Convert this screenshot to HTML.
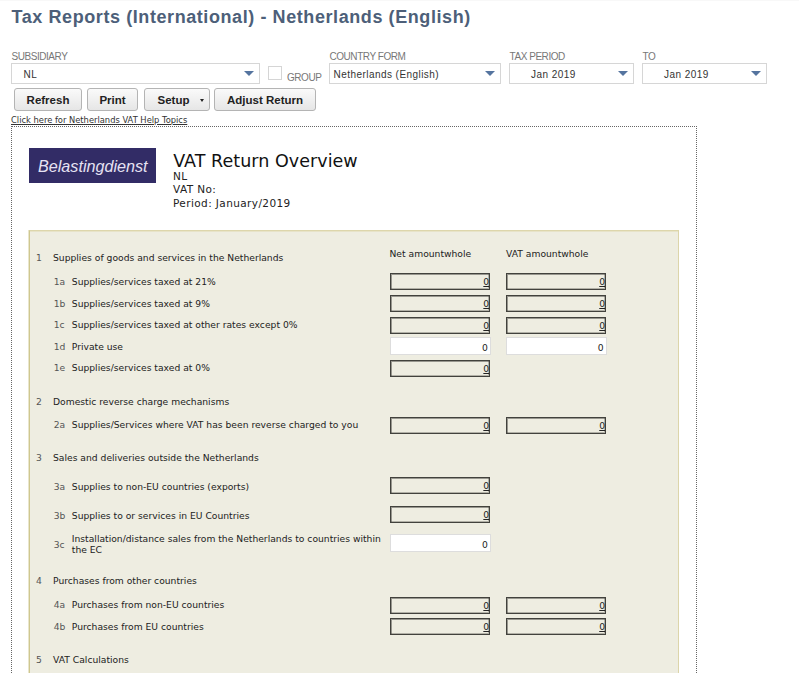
<!DOCTYPE html>
<html lang="en">
<head>
<meta charset="utf-8">
<title>Tax Reports (International) - Netherlands (English)</title>
<style>
html,body{margin:0;padding:0;background:#fff;}
body{width:799px;height:689px;position:relative;overflow:hidden;font-family:"Liberation Sans",sans-serif;}
.topline{position:absolute;left:0;top:0;width:799px;height:1px;background:#f8f8f8;}
h1.title{position:absolute;left:11.5px;top:3px;margin:0;font-family:"Liberation Sans",sans-serif;font-weight:bold;font-size:18px;line-height:28px;color:#4d5f79;white-space:nowrap;letter-spacing:0.58px;}
.lbl{position:absolute;top:50px;font-size:10px;line-height:14px;color:#777;white-space:nowrap;letter-spacing:-0.45px;}
.sel{position:absolute;top:63px;height:19px;border:1px solid #d6d6d6;background:#fff;box-sizing:content-box;}
.sel span{position:absolute;top:1px;line-height:20px;font-size:10px;color:#333;white-space:nowrap;letter-spacing:0.45px;}
.sel i{position:absolute;right:5px;top:7px;width:0;height:0;border-left:5px solid transparent;border-right:5px solid transparent;border-top:5.5px solid #55749f;}
.car{position:absolute;left:55px;top:10px;width:0;height:0;border-left:2.5px solid transparent;border-right:2.5px solid transparent;border-top:3px solid #222;}
.chk{position:absolute;left:268px;top:66px;width:12px;height:12px;border:1px solid #d5d5d5;background:#fff;}
.btn{position:absolute;top:88px;height:21px;border:1px solid #b4b4b4;border-radius:3px;background:linear-gradient(#fafafa,#e6e6e6);font-weight:bold;font-size:11.5px;line-height:22px;color:#222;text-align:center;white-space:nowrap;box-sizing:content-box;}
a.help{position:absolute;left:11px;top:114.7px;font-size:8.33px;line-height:11px;color:#333;text-decoration:underline;text-underline-offset:1px;white-space:nowrap;}
.dot{position:absolute;left:11px;top:126px;width:684px;height:560px;border:1px dotted #666;border-bottom:none;}
.logo{position:absolute;left:29px;top:148px;width:127px;height:34.5px;background:#322c66;}
.logo span{position:absolute;left:9px;top:8px;font-style:italic;font-size:17px;line-height:22px;transform:scaleX(0.95);color:#e6e2f3;white-space:nowrap;transform-origin:0 50%;}
.v{font-family:"DejaVu Sans","Liberation Sans",sans-serif;}
.h2{position:absolute;left:173.2px;letter-spacing:0.04px;top:149.5px;font-size:17.5px;line-height:22px;color:#111;white-space:nowrap;}
.sm{position:absolute;left:173px;font-size:10.5px;line-height:13px;color:#222;white-space:nowrap;letter-spacing:0.4px;}
.box{position:absolute;left:29px;top:230px;width:648px;height:460px;background:#eeede1;border:1px solid #dcd5aa;border-left-color:#cfc78f;border-top-color:#ddd6ab;box-shadow:-1px 0 0 rgba(207,199,143,0.45), inset 0 1px 0 rgba(221,214,171,0.45);}
.t{position:absolute;font-size:9.2px;line-height:12px;color:#222;white-space:nowrap;}
.n{position:absolute;font-size:9.2px;line-height:12px;color:#555;white-space:nowrap;}
.ro{position:absolute;width:98px;height:15px;border:1px solid #42423d;box-shadow:inset 1px 1px 0 0 rgba(66,66,61,0.5), inset -1px -1px 0 0 rgba(66,66,61,0.35);background:#eeede1;box-sizing:content-box;}
.ro a{position:absolute;right:-0.5px;top:2px;font-size:9.2px;line-height:12px;color:#222;text-decoration:underline;}
.ed{position:absolute;width:99px;height:16px;border:1px solid #ddd;background:#fff;box-sizing:content-box;}
.ed span{position:absolute;right:1.9px;top:4px;font-size:9.2px;line-height:12px;color:#222;}
.cut{position:absolute;left:0;top:672.5px;width:799px;height:20px;background:#fff;}
</style>
</head>
<body>
<div class="topline"></div>
<h1 class="title">Tax Reports (International) - Netherlands (English)</h1>

<div class="lbl" style="left:11.5px">SUBSIDIARY</div>
<div class="lbl" style="left:329.5px">COUNTRY FORM</div>
<div class="lbl" style="left:509.5px">TAX PERIOD</div>
<div class="lbl" style="left:642.5px">TO</div>

<div class="sel" style="left:11px;width:247px"><span style="left:11.5px">NL</span><i></i></div>
<div class="chk"></div>
<div class="lbl" style="left:287px;top:70.5px">GROUP</div>
<div class="sel" style="left:329px;width:170px"><span style="left:3.5px">Netherlands (English)</span><i></i></div>
<div class="sel" style="left:509px;width:123px"><span style="left:21px">Jan 2019</span><i></i></div>
<div class="sel" style="left:642px;width:123px"><span style="left:21px">Jan 2019</span><i></i></div>

<div class="btn" style="left:14px;width:66px">Refresh</div>
<div class="btn" style="left:87px;width:49px">Print</div>
<div class="btn" style="left:144px;width:64px;text-align:left"><span style="position:absolute;left:12.5px;top:0">Setup</span><b class="car"></b></div>
<div class="btn" style="left:214px;width:100px">Adjust Return</div>

<a class="help v">Click here for Netherlands VAT Help Topics</a>

<div class="dot"></div>
<div class="logo"><span>Belastingdienst</span></div>
<div class="h2 v">VAT Return Overview</div>
<div class="sm v" style="top:170px">NL</div>
<div class="sm v" style="top:183.25px">VAT No:</div>
<div class="sm v" style="top:196.5px">Period: January/2019</div>

<div class="box"></div>
<!--ROWS-->
<div class="t v" style="left:389.5px;top:247.8px">Net amountwhole</div>
<div class="t v" style="left:506px;top:247.8px">VAT amountwhole</div>
<div class="n v" style="left:36px;top:252.05px">1</div><div class="t v" style="left:53px;top:252.05px">Supplies of goods and services in the Netherlands</div>
<div class="n v" style="left:36px;top:395.55px">2</div><div class="t v" style="left:53px;top:395.55px">Domestic reverse charge mechanisms</div>
<div class="n v" style="left:36px;top:452.05px">3</div><div class="t v" style="left:53px;top:452.05px">Sales and deliveries outside the Netherlands</div>
<div class="n v" style="left:36px;top:575.05px">4</div><div class="t v" style="left:53px;top:575.05px">Purchases from other countries</div>
<div class="n v" style="left:36px;top:653.8px">5</div><div class="t v" style="left:53px;top:653.8px">VAT Calculations</div>
<div class="n v" style="left:53.7px;top:275.8px">1a</div>
<div class="t v" style="left:71.8px;top:275.8px">Supplies/services taxed at 21%</div>
<div class="ro" style="left:389.7px;top:273.3px"><a class="v">0</a></div>
<div class="ro" style="left:505.6px;top:273.3px"><a class="v">0</a></div>
<div class="n v" style="left:53.7px;top:297.8px">1b</div>
<div class="t v" style="left:71.8px;top:297.8px">Supplies/services taxed at 9%</div>
<div class="ro" style="left:389.7px;top:295.0px"><a class="v">0</a></div>
<div class="ro" style="left:505.6px;top:295.0px"><a class="v">0</a></div>
<div class="n v" style="left:53.7px;top:319.2px">1c</div>
<div class="t v" style="left:71.8px;top:319.2px">Supplies/services taxed at other rates except 0%</div>
<div class="ro" style="left:389.7px;top:316.5px"><a class="v">0</a></div>
<div class="ro" style="left:505.6px;top:316.5px"><a class="v">0</a></div>
<div class="n v" style="left:53.7px;top:340.8px">1d</div>
<div class="t v" style="left:71.8px;top:340.8px">Private use</div>
<div class="ed" style="left:389.7px;top:337.0px"><span class="v">0</span></div>
<div class="ed" style="left:505.6px;top:337.0px"><span class="v">0</span></div>
<div class="n v" style="left:53.7px;top:362.3px">1e</div>
<div class="t v" style="left:71.8px;top:362.3px">Supplies/services taxed at 0%</div>
<div class="ro" style="left:389.7px;top:359.6px"><a class="v">0</a></div>
<div class="n v" style="left:53.7px;top:419.1px">2a</div>
<div class="t v" style="left:71.8px;top:419.1px">Supplies/Services where VAT has been reverse charged to you</div>
<div class="ro" style="left:389.7px;top:416.5px"><a class="v">0</a></div>
<div class="ro" style="left:505.6px;top:416.5px"><a class="v">0</a></div>
<div class="n v" style="left:53.7px;top:480.8px">3a</div>
<div class="t v" style="left:71.8px;top:480.8px">Supplies to non-EU countries (exports)</div>
<div class="ro" style="left:389.7px;top:477.0px"><a class="v">0</a></div>
<div class="n v" style="left:53.7px;top:509.6px">3b</div>
<div class="t v" style="left:71.8px;top:509.6px">Supplies to or services in EU Countries</div>
<div class="ro" style="left:389.7px;top:506.0px"><a class="v">0</a></div>
<div class="n v" style="left:53.7px;top:539.0px">3c</div>
<div class="t v" style="left:71.8px;top:533.9px;line-height:10.8px">Installation/distance sales from the Netherlands to countries within<br>the EC</div>
<div class="ed" style="left:389.7px;top:534.3px"><span class="v">0</span></div>
<div class="n v" style="left:53.7px;top:599.4px">4a</div>
<div class="t v" style="left:71.8px;top:599.4px">Purchases from non-EU countries</div>
<div class="ro" style="left:389.7px;top:596.6px"><a class="v">0</a></div>
<div class="ro" style="left:505.6px;top:596.6px"><a class="v">0</a></div>
<div class="n v" style="left:53.7px;top:620.8px">4b</div>
<div class="t v" style="left:71.8px;top:620.8px">Purchases from EU countries</div>
<div class="ro" style="left:389.7px;top:618.0px"><a class="v">0</a></div>
<div class="ro" style="left:505.6px;top:618.0px"><a class="v">0</a></div>
<!--/ROWS-->

<div class="cut"></div>
</body>
</html>
